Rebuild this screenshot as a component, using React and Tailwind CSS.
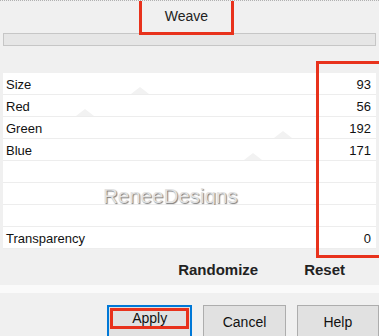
import React from 'react';

const ROWS = [
  { label: 'Size', value: '93', tri: 140 },
  { label: 'Red', value: '56', tri: 85 },
  { label: 'Green', value: '192', tri: 283 },
  { label: 'Blue', value: '171', tri: 253 },
  { label: '', value: '' },
  { label: '', value: '', mark: true },
  { label: '', value: '' },
  { label: 'Transparency', value: '0' },
];

function Ghost({ x }) {
  // faint slider thumb left behind in the list
  return (
    <svg className="absolute bottom-0" style={{ left: x - 9 }} width="18" height="7" viewBox="0 0 18 7">
      <polygon points="0,7 9,0 18,7" fill="#f2f2f2" />
    </svg>
  );
}

function Row({ row }) {
  return (
    <div className="relative h-[22px] flex items-center justify-between px-[3px] pt-[2px] border-b border-[#ededed] bg-white">
      {row.tri && <Ghost x={row.tri - 3} />}
      <span className="relative">{row.label}</span>
      {row.mark && (
        <span className="absolute left-[100px] top-[-2px] text-[20.5px] text-[#e2e2e2] [text-shadow:1px_1px_1px_#7a7a7a]">
          ReneeDesigns
        </span>
      )}
      <span className="relative pr-[2px]">{row.value}</span>
    </div>
  );
}

export default function App() {
  return (
    <div className="relative w-[379px] h-[336px] overflow-hidden bg-[#f0f0f0] text-[13px] text-[#111] font-['Liberation_Sans',Arial,sans-serif] border-t border-dotted border-[#b0b0b0]">
      {/* tab strip */}
      <div className="h-[32px] flex justify-center">
        <div className="ml-[-6px] w-[95px] h-[35px] mt-[-1px] flex items-center justify-center border-x-[3px] border-b-[3px] border-[#e8321c] text-[14px] text-[#222] z-10">
          Weave
        </div>
      </div>
      <div className="mx-[3px] h-[13px] bg-[#e6e6e6] border border-[#c6c6c6]" />

      {/* parameter panel */}
      <div className="mx-[3px] mt-[27px] h-[210px]">
        {ROWS.map((r, i) => (
          <Row key={i} row={r} />
        ))}
        <div className="flex justify-end gap-[46px] pr-[31px] pt-[10px] text-[15px] font-bold text-[#222]">
          <span>Randomize</span>
          <span>Reset</span>
        </div>
      </div>
      <div className="mt-[2px] h-[8px] bg-[#fafafa]" />

      {/* buttons */}
      <div className="flex mt-[12px] pl-[107px] gap-[11px] text-[14px] text-[#111]">
        <div className="w-[86px] h-[34px] border-2 border-[#0078d7] bg-[#e1e1e1] p-px">
          <div className="h-[21px] flex items-center justify-center border-[3px] border-[#e8321c]">Apply</div>
        </div>
        <div className="w-[83px] h-[34px] border border-[#adadad] bg-[#e1e1e1] flex justify-center pt-[6px]">Cancel</div>
        <div className="w-[83px] h-[34px] border border-[#adadad] bg-[#e1e1e1] flex justify-center pt-[6px]">Help</div>
      </div>

      {/* highlight around values */}
      <div className="absolute left-[316px] top-[60px] w-[70px] h-[197px] border-[3px] border-[#e8321c]" />
    </div>
  );
}
